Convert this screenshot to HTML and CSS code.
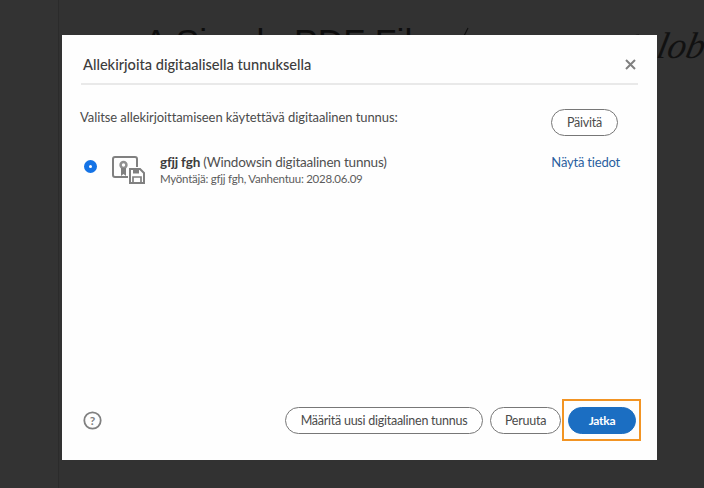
FILE: index.html
```html
<!DOCTYPE html>
<html lang="fi">
<head>
<meta charset="utf-8">
<title>Allekirjoita digitaalisella tunnuksella</title>
<link rel="stylesheet" href="styles.css">
</head>
<body>
<div class="app">
  <aside class="rail"></aside>
  <main class="doc">
    <h1 class="doc-title">A Simple PDF File</h1>
  </main>
</div>
<svg class="ink" width="210" height="20" viewBox="0 0 210 20"><path d="M10 20L16 8M178 20c2-3 5-5 9-5" fill="none" stroke="#111" stroke-width="1.200"/></svg>
<div class="signature">lob</div>
<div class="overlay">
  <section class="dialog">
    <header class="head">
      <h2 class="title">Allekirjoita digitaalisella tunnuksella</h2>
      <svg class="close" width="11" height="11" viewBox="0 0 11 11"><path d="M1 1l9 9M10 1l-9 9" stroke="#808080" stroke-width="2" fill="none"/></svg>
    </header>
    <div class="prompt-row">
      <p class="prompt">Valitse allekirjoittamiseen käytettävä digitaalinen tunnus:</p>
      <button class="btn refresh">Päivitä</button>
    </div>
    <div class="cert">
      <span class="radio"></span>
      <svg class="cert-icon" width="33" height="28" viewBox="0 0 33 28">
        <path d="M16 21H3a2 2 0 0 1-2-2V3a2 2 0 0 1 2-2h20a2 2 0 0 1 2 2v8" fill="none" stroke="#808080" stroke-width="2"/>
        <circle cx="11.500" cy="9" r="4.200" fill="#909090"/>
        <circle cx="11.500" cy="9" r="1.700" fill="#fff"/>
        <path d="M9 12v8l2.500-2 2.500 2v-8z" fill="#808080"/>
        <path d="M18 13h10l4 4v10H18z" fill="#fff" stroke="#808080" stroke-width="2"/>
        <path d="M21 13.500v4h6v-4z" fill="#808080"/>
        <path d="M21 26.500v-5.500h8v5.500" fill="none" stroke="#808080" stroke-width="1.700"/>
      </svg>
      <div class="cert-text">
        <div class="cert-name"><b>gfjj fgh</b> (Windowsin digitaalinen tunnus)</div>
        <div class="cert-meta">Myöntäjä: gfjj fgh, Vanhentuu: 2028.06.09</div>
      </div>
      <a class="details">Näytä tiedot</a>
    </div>
    <footer class="foot">
      <svg class="help" width="19" height="19" viewBox="0 0 19 19"><circle cx="9.500" cy="9.500" r="8.200" fill="none" stroke="#808080" stroke-width="1.800"/><text x="9.500" y="13.500" text-anchor="middle" class="help-mark">?</text></svg>
      <div class="actions">
        <button class="btn new-id">Määritä uusi digitaalinen tunnus</button>
        <button class="btn cancel">Peruuta</button>
        <span class="focus-ring"><button class="btn primary">Jatka</button></span>
      </div>
    </footer>
  </section>
</div>
</body>
</html>
```
FILE: styles.css
```css
* { box-sizing: border-box; }
html, body { margin: 0; height: 100%; }
body { position: relative; width: 704px; height: 488px; overflow: hidden; background: #323232; font-family: Lato, "Noto Sans", sans-serif; color: #4b4b4b; }
.app { display: flex; height: 100%; }
.rail { width: 59px; border-right: 1px solid #2b2b2b; background: #333; }
.doc { flex: 1; padding: 21px 0 0 85px; }
.doc-title { margin: 0; font: 400 35.500px/1.2 "Liberation Sans", Arial, sans-serif; color: #0d0d0d; white-space: nowrap; }
.ink { position: absolute; left: 452px; top: 20px; }
.signature { position: absolute; left: 658px; top: 24px; font: italic 400 37px/1.2 "Liberation Serif", serif; color: #111; transform: skewX(-12deg); }
.overlay { position: absolute; inset: 0; padding: 35px 47px 28px 62px; }
.dialog { display: flex; flex-direction: column; height: 100%; background: #fefefe; padding: 0 19px 19px 18px; }
.head { display: flex; align-items: center; justify-content: space-between; height: 50px; padding: 11px 2px 0 2px; margin-left: 1px; border-bottom: 2px solid #e9e9e9; }
.title { margin: 0; font-size: 14.600px; font-weight: 500; color: #3c3c3c; }
.prompt-row { display: flex; align-items: flex-start; justify-content: space-between; margin-top: 24px; padding-right: 20px; }
.prompt { margin: 0; font-size: 13px; line-height: 17px; letter-spacing: -0.08px; color: #4b4b4b; }
.btn { height: 27px; padding: 0 15px; border: 1.500px solid #777; border-radius: 14px; background: #fff; font: 400 12.500px Lato, sans-serif; letter-spacing: -0.25px; color: #4b4b4b; white-space: nowrap; }
.refresh { width: 67px; padding: 0; }
.cert { display: flex; align-items: flex-start; margin-top: 18px; padding-left: 4px; padding-right: 18px; }
.radio { width: 13px; height: 13px; margin-top: 6px; border-radius: 50%; border: 5px solid #1473e6; background: #fff; }
.cert-icon { margin: 2px 0 0 15px; }
.cert-text { flex: 1; margin-left: 15px; }
.cert-name { font-size: 13.500px; line-height: 17px; letter-spacing: -0.2px; color: #505050; }
.cert-name b { font-weight: 700; color: #3c3c3c; }
.cert-meta { font-size: 11.500px; line-height: 15px; letter-spacing: -0.25px; color: #5c5c5c; }
.details { font-size: 13px; line-height: 17px; letter-spacing: -0.2px; color: #2a5f9e; }
.foot { display: flex; align-items: center; justify-content: space-between; margin-top: auto; padding-left: 3px; }
.help-mark { font: 700 12px Lato, sans-serif; fill: #808080; }
.actions { display: flex; align-items: center; margin-right: -3px; }
.new-id { width: 198px; padding: 0; margin-right: 7px; }
.cancel { width: 71px; padding: 0; margin-right: 1px; }
.focus-ring { display: flex; padding: 6px 3px 5px 4px; border: 2px solid #f29423; }
.primary { width: 68px; padding: 0; border-color: #1b6ec2; background: #1b6ec2; color: #fff; font-size: 12px; font-weight: 700; }
```
